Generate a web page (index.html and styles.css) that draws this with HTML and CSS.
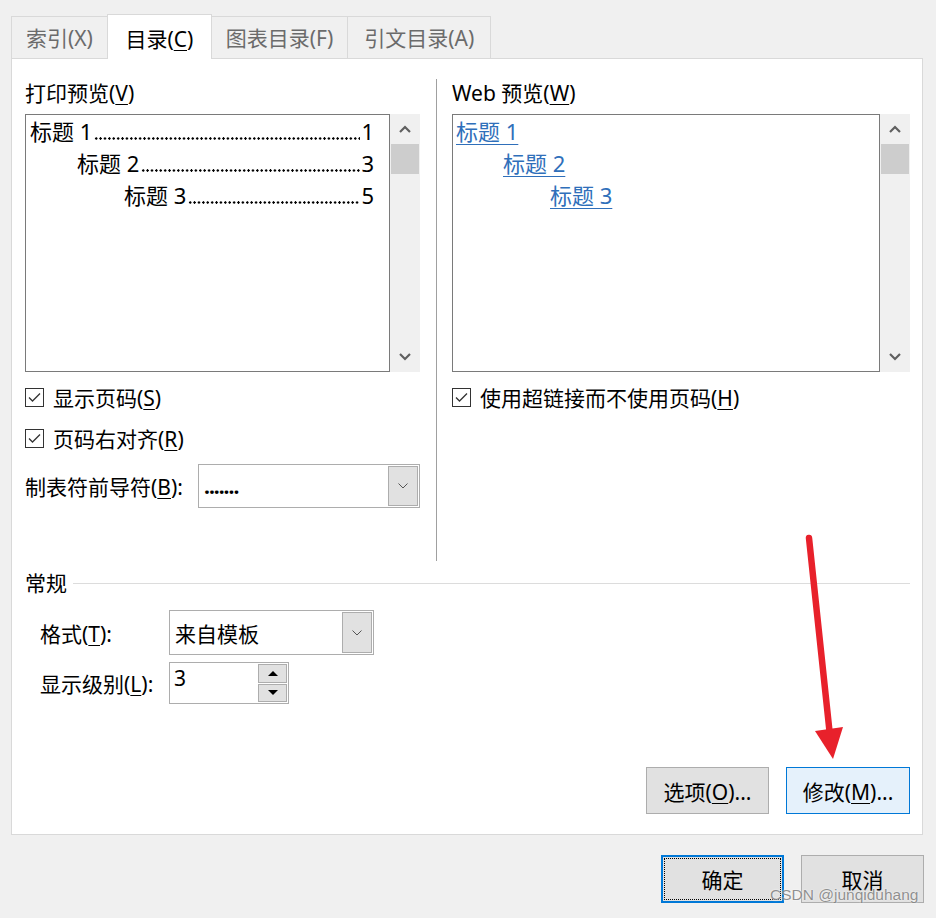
FILE: index.html
```html
<!DOCTYPE html>
<html lang="zh-CN">
<head>
  <meta charset="UTF-8" />
  <title>索引和目录</title>
  <link rel="stylesheet" href="styles.css">
</head>
<body>
  <div class="dialog">
    <div class="tabs">
      <div class="tab">索引(X)</div>
      <div class="tab active">目录(<u>C</u>)</div>
      <div class="tab">图表目录(F)</div>
      <div class="tab">引文目录(A)</div>
    </div>

    <div class="panel">
      <div class="previews">
        <div class="col">
          <div class="label">打印预览(<u>V</u>)</div>
          <div class="listwrap">
            <div class="listbox">
              <div class="toc-line lvl1"><span>标题 1</span><span class="dots"></span><span>1</span></div>
              <div class="toc-line lvl2"><span>标题 2</span><span class="dots"></span><span>3</span></div>
              <div class="toc-line lvl3"><span>标题 3</span><span class="dots"></span><span>5</span></div>
            </div>
            <div class="scrollbar">
              <svg class="arrow" width="12" height="8" viewBox="0 0 12 8"><path d="M1 7 L6 2 L11 7" fill="none" stroke="#606060" stroke-width="2.2"/></svg>
              <div class="thumb"></div>
              <div class="track"></div>
              <svg class="arrow" width="12" height="8" viewBox="0 0 12 8"><path d="M1 1 L6 6 L11 1" fill="none" stroke="#606060" stroke-width="2.2"/></svg>
            </div>
          </div>
          <div class="check first">
            <svg width="19" height="19" viewBox="0 0 19 19"><rect x="0.5" y="0.5" width="18" height="18" fill="#fff" stroke="#333"/><path d="M4 9.5 L7.5 13 L15 5.5" fill="none" stroke="#333" stroke-width="1.3"/></svg>
            <span>显示页码(<u>S</u>)</span>
          </div>
          <div class="check">
            <svg width="19" height="19" viewBox="0 0 19 19"><rect x="0.5" y="0.5" width="18" height="18" fill="#fff" stroke="#333"/><path d="M4 9.5 L7.5 13 L15 5.5" fill="none" stroke="#333" stroke-width="1.3"/></svg>
            <span>页码右对齐(<u>R</u>)</span>
          </div>
          <div class="leader-row">
            <span>制表符前导符(<u>B</u>):</span>
            <div class="combo leader-combo">
              <span class="value">.......</span>
              <div class="drop"><svg width="10" height="6" viewBox="0 0 10 6"><path d="M0.5 0.5 L5 5 L9.5 0.5" fill="none" stroke="#555" stroke-width="1"/></svg></div>
            </div>
          </div>
        </div>

        <div class="sep"></div>

        <div class="col">
          <div class="label">Web 预览(<u>W</u>)</div>
          <div class="listwrap">
            <div class="listbox web">
              <div class="link-line lvl1"><a>标题 1</a></div>
              <div class="link-line lvl2"><a>标题 2</a></div>
              <div class="link-line lvl3"><a>标题 3</a></div>
            </div>
            <div class="scrollbar">
              <svg class="arrow" width="12" height="8" viewBox="0 0 12 8"><path d="M1 7 L6 2 L11 7" fill="none" stroke="#606060" stroke-width="2.2"/></svg>
              <div class="thumb"></div>
              <div class="track"></div>
              <svg class="arrow" width="12" height="8" viewBox="0 0 12 8"><path d="M1 1 L6 6 L11 1" fill="none" stroke="#606060" stroke-width="2.2"/></svg>
            </div>
          </div>
          <div class="check first">
            <svg width="19" height="19" viewBox="0 0 19 19"><rect x="0.5" y="0.5" width="18" height="18" fill="#fff" stroke="#333"/><path d="M4 9.5 L7.5 13 L15 5.5" fill="none" stroke="#333" stroke-width="1.3"/></svg>
            <span>使用超链接而不使用页码(<u>H</u>)</span>
          </div>
        </div>
      </div>

      <div class="group">
        <div class="group-title"><span>常规</span><div class="rule"></div></div>
        <div class="form-row format-row">
          <span class="form-label">格式(<u>T</u>):</span>
          <div class="combo format-combo">
            <span class="value">来自模板</span>
            <div class="drop"><svg width="10" height="6" viewBox="0 0 10 6"><path d="M0.5 0.5 L5 5 L9.5 0.5" fill="none" stroke="#555" stroke-width="1"/></svg></div>
          </div>
        </div>
        <div class="form-row level-row">
          <span class="form-label">显示级别(<u>L</u>):</span>
          <div class="spinner">
            <span class="value">3</span>
            <div class="spin-btns">
              <div class="spin"><svg width="10" height="5" viewBox="0 0 10 5"><path d="M0 5 L5 0 L10 5 Z" fill="#000"/></svg></div>
              <div class="spin"><svg width="10" height="5" viewBox="0 0 10 5"><path d="M0 0 L5 5 L10 0 Z" fill="#000"/></svg></div>
            </div>
          </div>
        </div>
      </div>

      <div class="actions">
        <button class="btn">选项(<u>O</u>)...</button>
        <button class="btn hot">修改(<u>M</u>)...</button>
      </div>
    </div>

    <div class="footer">
      <button class="btn default"><span class="focus">确定</span></button>
      <button class="btn">取消</button>
    </div>

    <svg class="annotation" width="936" height="918" viewBox="0 0 936 918">
      <line x1="809" y1="538" x2="830" y2="736" stroke="#e8212b" stroke-width="6.5" stroke-linecap="round"/>
      <path d="M815 731 L843 727 L833 759 Z" fill="#e8212b"/>
    </svg>
    <div class="watermark">CSDN @junqiduhang</div>
  </div>
</body>
</html>
```

FILE: styles.css
```css
body {
  margin: 0;
  background-color: #f0f0f0;
  font-family: "Noto Sans", "Noto Sans CJK SC", sans-serif;
  font-size: 21px;
  color: #000;
}
u {
  text-underline-offset: 3px;
  text-decoration-thickness: 1px;
}
.dialog {
  position: relative;
  width: 936px;
  height: 918px;
}

/* tabs */
.tabs {
  display: flex;
  padding: 14px 0 0 11px;
}
.tab {
  box-sizing: border-box;
  height: 42px;
  margin-top: 2px;
  margin-right: -1px;
  padding: 7px 14px 0;
  line-height: 28px;
  border: 1px solid #d9d9d9;
  border-bottom: none;
  color: #6b6b6b;
  background-color: #f0f0f0;
}
.tab:last-child {
  padding: 7px 16px 0;
}
.tab.active {
  position: relative;
  z-index: 1;
  height: 45px;
  margin-top: 0;
  margin-bottom: -1px;
  padding: 10px 17.5px 0;
  background-color: #fff;
  color: #000;
}

/* main panel */
.panel {
  box-sizing: border-box;
  display: flex;
  flex-direction: column;
  width: 912px;
  height: 777px;
  margin-left: 11px;
  padding: 20px 12px 20px 13px;
  background-color: #fff;
  border: 1px solid #d9d9d9;
}
.previews {
  display: flex;
  height: 482px;
}
.col {
  display: flex;
  flex-direction: column;
  min-width: 0;
}
.col:first-child {
  width: 395px;
}
.col:last-child {
  width: 458px;
}
.sep {
  width: 1px;
  margin: 0 15px 0 16px;
  background-color: #a0a0a0;
}
.label {
  line-height: 28px;
  margin-bottom: 7px;
}
.listwrap {
  display: flex;
  height: 258px;
}
.listbox {
  flex: 1;
  min-width: 0;
  overflow: hidden;
  box-sizing: border-box;
  border: 1px solid #7a7a7a;
  padding: 0 15px 0 4px;
  font-size: 22px;
  line-height: 32px;
}
.scrollbar {
  width: 30px;
  display: flex;
  flex-direction: column;
  align-items: center;
  background-color: #f0f0f0;
}
.scrollbar .arrow {
  margin: 11px 0;
}
.scrollbar .thumb {
  width: 28px;
  height: 30px;
  background-color: #cdcdcd;
}
.scrollbar .track {
  flex: 1;
}
.toc-line {
  display: flex;
  white-space: nowrap;
}
.toc-line .dots {
  flex: 1;
  align-self: flex-end;
  height: 3px;
  margin: 0 1px 7px 2px;
  background-image: radial-gradient(circle, #000 1px, transparent 1.4px);
  background-size: 4.4px 3px;
  background-repeat: repeat-x;
}
.lvl2 {
  padding-left: 47px;
}
.lvl3 {
  padding-left: 94px;
}
.listbox.web {
  padding-left: 3px;
}
.link-line a {
  color: #2f6fba;
  text-decoration: underline;
  text-underline-offset: 4px;
  text-decoration-thickness: 1px;
}

.check {
  display: flex;
  align-items: center;
  gap: 9px;
  height: 28px;
  margin-top: 13px;
}
.check.first {
  margin-top: 11px;
}
.leader-row {
  display: flex;
  align-items: center;
  justify-content: space-between;
  margin-top: 12px;
}

/* combo boxes */
.combo {
  box-sizing: border-box;
  display: flex;
  align-items: center;
  border: 1px solid #adadad;
  padding: 1px;
  background-color: #fff;
}
.combo .value {
  flex: 1;
  padding-left: 4px;
}
.combo .drop {
  box-sizing: border-box;
  width: 30px;
  height: 100%;
  display: flex;
  align-items: center;
  justify-content: center;
  background-color: #e1e1e1;
  border: 1px solid #adadad;
}
.leader-combo {
  width: 222px;
  height: 44px;
}
.leader-combo .value {
  font-weight: bold;
  letter-spacing: -1px;
}
.format-combo {
  width: 205px;
  height: 45px;
}

/* general group */
.group-title {
  display: flex;
  align-items: center;
  gap: 6px;
  line-height: 28px;
  margin-top: 8px;
}
.group-title .rule {
  flex: 1;
  height: 1px;
  background-color: #dcdcdc;
}
.form-row {
  display: flex;
  align-items: center;
  padding-left: 15px;
}
.form-label {
  width: 129px;
}
.format-row {
  margin-top: 13px;
}
.level-row {
  margin-top: 7px;
}
.spinner {
  box-sizing: border-box;
  display: flex;
  width: 120px;
  height: 42px;
  border: 1px solid #adadad;
  padding: 1px;
}
.spinner .value {
  flex: 1;
  padding-left: 3px;
  line-height: 28px;
}
.spin-btns {
  display: flex;
  flex-direction: column;
  gap: 1px;
  width: 29px;
}
.spin {
  flex: 1;
  display: flex;
  align-items: center;
  justify-content: center;
  background-color: #e1e1e1;
  border: 1px solid #adadad;
}

/* buttons */
.actions {
  margin-top: auto;
  display: flex;
  justify-content: flex-end;
  gap: 17px;
}
.btn {
  box-sizing: border-box;
  width: 123px;
  height: 47px;
  font-family: inherit;
  font-size: 21px;
  color: #000;
  background-color: #e1e1e1;
  border: 1px solid #adadad;
  padding: 0;
}
.btn.hot {
  width: 124px;
  background-color: #e5f1fb;
  border-color: #0078d7;
}
.footer {
  display: flex;
  justify-content: flex-end;
  gap: 17px;
  margin-top: 20px;
  padding-right: 12px;
}
.footer .btn {
  height: 48px;
}
.btn.default {
  border: 2px solid #0078d7;
  padding: 1px;
}
.btn.default .focus {
  display: flex;
  align-items: center;
  justify-content: center;
  height: 100%;
  border: 1px dotted #000;
  box-sizing: border-box;
}

/* overlays */
.annotation {
  position: absolute;
  left: 0;
  top: 0;
  pointer-events: none;
}
.watermark {
  position: absolute;
  left: 770px;
  top: 886px;
  font-family: "Liberation Sans", sans-serif;
  font-size: 15.5px;
  color: rgba(110, 110, 110, 0.75);
  text-shadow: 0 0 2px #fff;
}
```
